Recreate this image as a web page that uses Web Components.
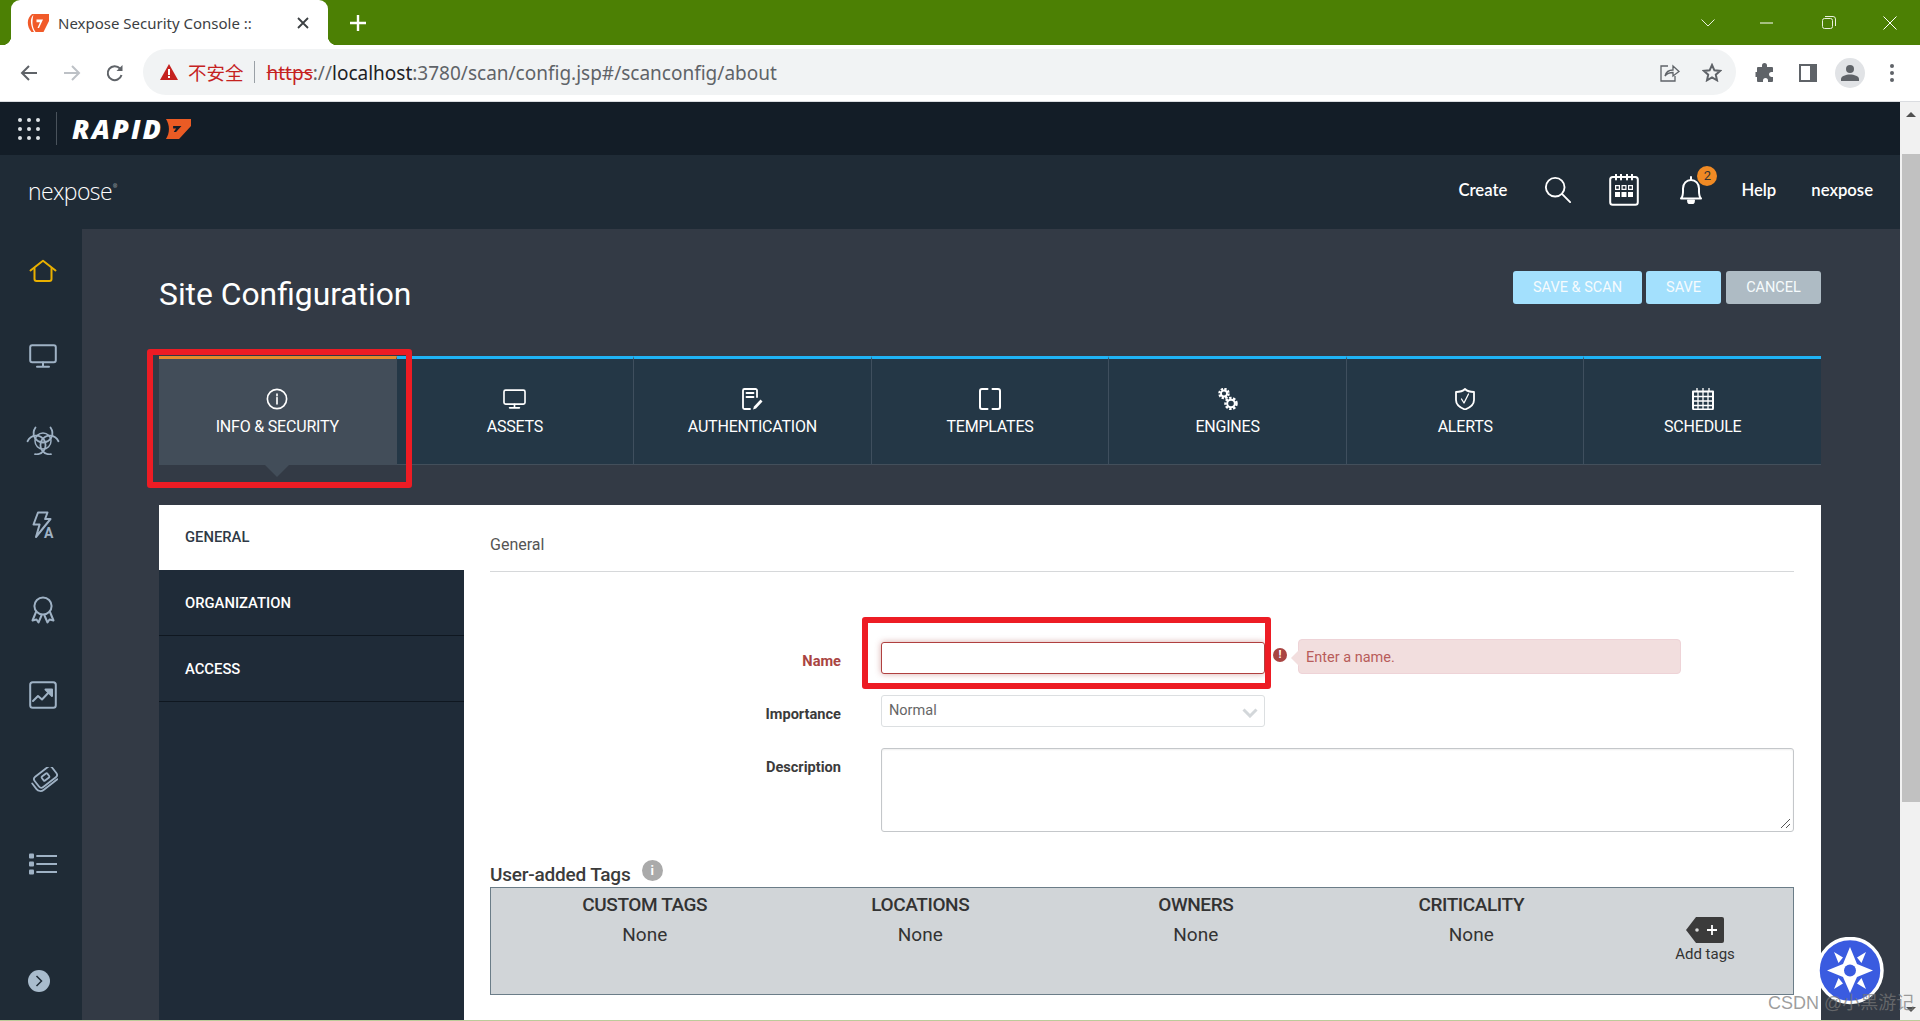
<!DOCTYPE html>
<html lang="en">
<head>
<meta charset="utf-8">
<title>Nexpose Security Console</title>
<style>
  html, body { margin: 0; height: 1021px; overflow: hidden; }
  body {
    display: flex;
    flex-direction: column;
    background: #bccb9a;
    padding-bottom: 1px;
    box-sizing: border-box;
    font-family: Roboto, "Liberation Sans", sans-serif;
    position: relative;
  }
</style>
</head>
<body>
<browser-tabs></browser-tabs>
<browser-toolbar></browser-toolbar>
<app-page>
  <platform-bar></platform-bar>
  <nexpose-header></nexpose-header>
  <app-body>
    <side-nav></side-nav>
    <site-config></site-config>
  </app-body>
</app-page>

<script>
const BIO_LOBE = `<path d="M10.500 1.500C6 8 10 16 18 16.500C26 16 30 8 25.500 1.500"/>`;
const ICONS = {
  home: [28, 24, `<path d="M1.5 11.5 14 1.8l12.5 9.7" /><path d="M5.5 9.5V20a2 2 0 0 0 2 2h13a2 2 0 0 0 2-2V9.5"/>`],
  monitor: [28, 24, `<rect x="1.2" y="1.2" width="25.6" height="17" rx="2"/><path d="M14 18.5v4M8 22.8h12"/>`],
  bio: [36, 29, `${BIO_LOBE}<g transform="rotate(120 18 15)">${BIO_LOBE}</g><g transform="rotate(240 18 15)">${BIO_LOBE}</g><circle cx="18" cy="15" r="8" stroke-width="1.500"/>`],
  bolt: [24, 28, `<path d="M7 1.500h9.500l-2.400 6.500h5.400L5 26l3.600-12.500H2.500z"/>`],
  ribbon: [24, 28, `<circle cx="12" cy="10" r="8.600"/><path d="M5 16 1.500 24.500l4-1 2 3 3-7M19 16l3.500 8.500-4-1-2 3-3-7"/>`],
  chart: [28, 28, `<rect x="1.200" y="1.200" width="25.600" height="25.600" rx="2.500"/><path d="m4 20 5-5 4 3.500 8.500-9"/><path d="M16.500 8.500h6.500V15z" fill="currentColor"/>`],
  ticket: [30, 25, `<g transform="translate(17.500 10) rotate(-38)"><rect x="-11" y="-6.500" width="22" height="13" rx="3"/><rect x="-3.500" y="-2.500" width="7" height="5" rx="1"/><path d="M-14.500-3v7a5 5 0 0 0 5 5H8"/></g>`],
  list: [28, 22, `<path d="M8 3h20M8 11h20M8 19h20"/><g fill="currentColor" stroke="none"><rect x="0" y="0.500" width="5" height="5" rx="1"/><rect x="0" y="8.500" width="5" height="5" rx="1"/><rect x="0" y="16.500" width="5" height="5" rx="1"/></g>`],
  info: [24, 24, `<circle cx="12" cy="12" r="10.500"/><path d="M12 10.500v7M12 6.500v2"/>`],
  doc: [22, 22, `<path d="M16 9V2.500A1.500 1.500 0 0 0 14.500 1h-11A1.500 1.500 0 0 0 2 2.500v17A1.500 1.500 0 0 0 3.500 21H9"/><path d="M5.500 5h7M5.500 9h7"/><path d="m12 21.500 1-3 6.500-7 2 2-6.500 7z" fill="currentColor" stroke="none"/>`],
  frame: [22, 22, `<path d="M8.500 1H3a2 2 0 0 0-2 2v16a2 2 0 0 0 2 2h5.500M13.500 1H19a2 2 0 0 1 2 2v16a2 2 0 0 1-2 2h-5.500"/>`],
  gears: [20, 22, `<g stroke-linecap="butt"><circle cx="6" cy="5.500" r="4.500" stroke-width="2.500" stroke-dasharray="2.200 1.300"/><circle cx="13" cy="15.500" r="5.500" stroke-width="2.500" stroke-dasharray="2.400 1.500"/></g><circle cx="6" cy="5.500" r="3" stroke-width="1.800"/><circle cx="13" cy="15.500" r="3.800" stroke-width="2"/>`],
  shield: [20, 22, `<path d="M10 1c2 2 5 3 9 3v8c0 5-5 8-9 9.500C6 20 1 17 1 12V4c4 0 7-1 9-3z"/><path d="m6.500 11 2.500 4 4.500-9" stroke-width="1.300"/>`],
  grid: [22, 22, `<path d="M1 3.500h20V20a1.500 1.500 0 0 1-1.500 1.500h-17A1.500 1.500 0 0 1 1 20z"/><path d="M1 8.500h20M1 13h20M1 17.500h20M6 3.500v18M11 3.500v18M16 3.500v18M5 0v3M11 0v3M17 0v3" stroke-width="1.300"/>`],
  search: [30, 30, `<circle cx="12" cy="12" r="10"/><path d="m19.500 19.500 8.500 8.500"/>`],
  cal: [30, 32, `<rect x="1.200" y="3" width="27.600" height="27.800" rx="2.500"/><path d="M7 0.500v5M12 0.500v5M18 0.500v5M23 0.500v5"/><g fill="currentColor" stroke="none"><path d="M6 11h5v5H6zM12.500 11h5v5h-5zM19 11h5v5h-5zM6 18h5v5H6zM12.500 18h5v5h-5zM19 18h5v5h-5z"/></g><path d="M7.200 12.200h2.600v2.600H7.200zM13.700 12.200h2.600v2.600h-2.600zM20.200 12.200h2.600v2.600h-2.600z" fill="#1f2b36" stroke="none"/>`],
  bell: [24, 28, `<path d="M2 22.500c2.500-2.500 2-5 2-10 0-5 3.500-8.500 8-8.500s8 3.500 8 8.500c0 5-.5 7.500 2 10z"/><path d="M12 1v3"/><path d="M9 24.500a3 3 0 0 0 6 0z" fill="currentColor"/>`]
};

class NxIcon extends HTMLElement {
  connectedCallback() {
    this.attachShadow({mode: "open"});
    const [w, h, body] = ICONS[this.getAttribute("name")];
    const width = this.getAttribute("width") || w;
    const height = this.getAttribute("height") || h;
    const stroke = this.getAttribute("stroke") || 2;
    this.shadowRoot.innerHTML = `
      <style>:host { display: block; line-height: 0; }</style>
      <svg width="${width}" height="${height}" viewBox="0 0 ${w} ${h}" fill="none" stroke="currentColor"
        stroke-width="${stroke}" stroke-linecap="round" stroke-linejoin="round">${body}</svg>
    `;
  }
}
customElements.define("nx-icon", NxIcon);

class BrowserTabs extends HTMLElement {
  connectedCallback() {
    this.attachShadow({mode: "open"});
    this.shadowRoot.innerHTML = `
      <style>
        :host { display: flex; height: 45px; background: #4c8004; align-items: stretch; flex: none; padding-left: 11px; }
        .tab {
          width: 317px; background: #fff; border-radius: 9px 9px 0 0; position: relative;
          display: flex; align-items: center; padding-left: 16px; box-sizing: border-box;
          font: 15px "Noto Sans", "Open Sans", sans-serif; color: #3c4043;
        }
        .tab::before, .tab::after { content: ""; position: absolute; bottom: 0; width: 9px; height: 9px; }
        .tab::before { left: -9px; background: radial-gradient(circle at 0 0, #4c8004 9px, #fff 9.500px); }
        .tab::after { right: -9px; background: radial-gradient(circle at 100% 0, #4c8004 9px, #fff 9.500px); }
        .title { margin-left: 9px; width: 234px; white-space: nowrap; }
        .close { width: 16px; height: 16px; margin-left: 3px; }
        .plus { margin-left: 21px; align-self: center; }
        .win { margin-left: auto; display: flex; align-items: center; color: #fff; }
        .win svg { display: block; }
      </style>
      <div class="tab">
        <svg width="22" height="20" viewBox="0 0 22 20">
          <path d="M5 1h2.500C4.500 3 3.500 6.500 4 10c.3 3 1.500 6.500 3 9H4.500C2 16 .8 13 .8 9.500.8 6 2.500 3 5 1z" fill="#f15a29"/>
          <path d="M6.500 1H22v7l-5.500 11H8.500C6.500 16 5.500 13 5.500 10c0-4 .5-6.500 1-9z" fill="#f15a29"/>
          <path d="M9.500 6.500H16L12 15h-1.500l2.500-5.800H9.500z" fill="#fff"/>
        </svg>
        <span class="title">Nexpose Security Console ::</span>
        <svg class="close" viewBox="0 0 16 16" stroke="#3c4043" stroke-width="1.800"><path d="M3 3l10 10M13 3 3 13"/></svg>
      </div>
      <svg class="plus" width="18" height="18" viewBox="0 0 18 18" stroke="#fff" stroke-width="2.400"><path d="M9 1v16M1 9h16"/></svg>
      <div class="win">
        <svg width="14" height="8" viewBox="0 0 14 8" fill="none" stroke="#e8f0dc" style="margin-right:45px"><path d="M.5.5 7 7l6.500-6.500"/></svg>
        <svg width="13" height="2" viewBox="0 0 13 2" fill="none" stroke="#fff" style="margin-right:49px"><path d="M0 1h13"/></svg>
        <svg width="14" height="13" viewBox="0 0 14 13" fill="none" stroke="#e8f0dc" style="margin-right:47px"><rect x=".5" y="2.500" width="10" height="10" rx="2"/><path d="M3 .5h8a2.500 2.500 0 0 1 2.500 2.500v7"/></svg>
        <svg width="14" height="14" viewBox="0 0 14 14" fill="none" stroke="#fff" style="margin-right:23px"><path d="m.5.500 13 13M13.500.5l-13 13"/></svg>
      </div>
    `;
  }
}
customElements.define("browser-tabs", BrowserTabs);

class BrowserToolbar extends HTMLElement {
  connectedCallback() {
    this.attachShadow({mode: "open"});
    this.shadowRoot.innerHTML = `
      <style>
        :host {
          display: flex; height: 57px; box-sizing: border-box; background: #fff; flex: none; align-items: center;
          padding: 0 0 0 20px; border-bottom: 1px solid #dadce0; padding-bottom: 1px;
        }
        .nav { display: flex; align-items: center; gap: 25px; width: 123px; }
        .bar {
          width: 1593px; height: 46px; border-radius: 23px; background: #f1f3f4; box-sizing: border-box;
          display: flex; align-items: center; padding-left: 17px; margin-top: -1px;
          font: 19px "Noto Sans", "Open Sans", sans-serif; color: #5f6368; white-space: nowrap;
        }
        .url { position: relative; top: 1px; }
        .warn { font: 18.500px "Noto Sans CJK SC", sans-serif; color: #c5221f; margin-left: 10px; }
        .sep { width: 1px; height: 22px; background: #9aa0a6; margin: 0 12px 0 10px; }
        .https { color: #c5221f; text-decoration: line-through; }
        .host { color: #202124; }
        .end { margin-left: auto; display: flex; align-items: center; gap: 22px; padding-right: 14px; }
        .tools { display: flex; align-items: center; }
        svg { display: block; flex: none; }
        .avatar { width: 30px; height: 30px; border-radius: 50%; background: #e1e3e6; display: flex; align-items: center; justify-content: center; }
      </style>
      <div class="nav">
        <svg width="18" height="18" viewBox="0 0 18 18" fill="none" stroke="#5f6368" stroke-width="2"><path d="M17 9H2M9 2 2 9l7 7"/></svg>
        <svg width="18" height="18" viewBox="0 0 18 18" fill="none" stroke="#bdc1c6" stroke-width="2"><path d="M1 9h15M9 2l7 7-7 7"/></svg>
        <svg width="18" height="18" viewBox="0 0 18 18" fill="none" stroke="#5f6368" stroke-width="2"><path d="M15.500 11a7 7 0 1 1-1.500-6.500"/><path d="M16.500 1v6h-6" fill="#5f6368" stroke="none"/></svg>
      </div>
      <div class="bar">
        <svg width="18" height="16" viewBox="0 0 18 16"><path d="M9 0 18 16H0z" fill="#c5221f"/><path d="M8 5h2v6H8zM8 12h2v2H8z" fill="#fff"/></svg>
        <span class="warn">不安全</span>
        <span class="sep"></span>
        <span class="url"><span class="https">https</span>://<span class="host">localhost</span>:3780/scan/config.jsp#/scanconfig/about</span>
        <div class="end">
          <svg width="20" height="19" viewBox="0 0 20 19" fill="none" stroke="#5f6368" stroke-width="1.300"><path d="M8 3H1v15h14v-5"/><path d="M5 13c1-4 4-6 8-6V3l6 5.500L13 13V9.500c-3 0-6 1-8 3.500z"/></svg>
          <svg width="20" height="19" viewBox="0 0 20 19" fill="none" stroke="#5f6368" stroke-width="2"><path d="m10 2 2.400 5.300 5.600.6-4.200 3.800 1.200 5.600L10 14.500 5 17.300l1.200-5.600L2 7.900l5.600-.6z"/></svg>
        </div>
      </div>
      <div class="tools" style="margin-left:19px">
        <svg width="20" height="20" viewBox="0 0 20 20" fill="#5f6368"><path d="M7 2.500a2.500 2.500 0 0 1 5 0V4h5a1 1 0 0 1 1 1v4h-1.500a2.500 2.500 0 0 0 0 5H18v4a1 1 0 0 1-1 1h-4v-1.500a2.500 2.500 0 0 0-5 0V19H3a1 1 0 0 1-1-1v-4H.5v-5H2V5a1 1 0 0 1 1-1h4z"/></svg>
        <svg style="margin-left:24px" width="18" height="18" viewBox="0 0 18 18"><path d="M0 0h18v18H0z" fill="#5f6368"/><path d="M2 2h9v14H2z" fill="#fff"/></svg>
        <div class="avatar" style="margin-left:18px">
          <svg width="18" height="16" viewBox="0 0 18 16" fill="#5f6368"><circle cx="9" cy="4" r="4"/><path d="M0 16v-2c0-3 5-4.500 9-4.500s9 1.500 9 4.500v2z"/></svg>
        </div>
        <svg style="margin-left:25px" width="4" height="18" viewBox="0 0 4 18" fill="#5f6368"><circle cx="2" cy="2" r="2"/><circle cx="2" cy="9" r="2"/><circle cx="2" cy="16" r="2"/></svg>
      </div>
    `;
  }
}
customElements.define("browser-toolbar", BrowserToolbar);

class AppPage extends HTMLElement {
  connectedCallback() {
    this.attachShadow({mode: "open"});
    this.shadowRoot.innerHTML = `
      <style>
        :host { display: grid; grid-template-columns: 1900px 20px; flex: 1; min-height: 0; }
        .main { display: flex; flex-direction: column; min-height: 0; overflow: hidden; }
        .scroll { background: #f1f1f1; display: flex; flex-direction: column; align-items: center; position: relative; }
        .up, .down { width: 0; height: 0; border: 5px solid transparent; position: absolute; left: 6px; }
        .up { border-bottom: 5px solid #505050; top: 5px; border-left-width: 5px; }
        .down { border-top: 5px solid #505050; bottom: 3px; }
        .thumb { position: absolute; top: 52px; left: 2px; right: 0; height: 648px; background: #c1c1c1; }
      </style>
      <div class="main"><slot></slot></div>
      <div class="scroll"><span class="up"></span><span class="thumb"></span><span class="down"></span></div>
    `;
  }
}
customElements.define("app-page", AppPage);

class PlatformBar extends HTMLElement {
  connectedCallback() {
    this.attachShadow({mode: "open"});
    const dots = Array(9).fill("<i></i>").join("");
    this.shadowRoot.innerHTML = `
      <style>
        :host { display: flex; align-items: center; height: 53px; flex: none; background: #131d27; padding-left: 18px; }
        .dots { display: grid; grid-template-columns: repeat(3, 4px); gap: 5px; }
        .dots i { width: 4px; height: 4px; border-radius: 50%; background: #dfe4e8; }
        .sep { width: 1px; height: 33px; background: #49525b; margin: 0 15px 0 16px; }
        .logo { display: flex; align-items: center; font: italic 800 27px/30px "Open Sans", sans-serif; color: #fff; letter-spacing: 2.100px; }
        svg { display: block; margin-left: -3px; }
      </style>
      <div class="dots">${dots}</div>
      <span class="sep"></span>
      <div class="logo">RAPID<svg width="31" height="20" viewBox="0 0 26 20" preserveAspectRatio="none"><path d="M5 0h21v7L16 20H5c1.500-3 2.500-6 2.500-10S6.500 3 5 0z" fill="#ea5b24"/><path d="M11 7h7l-4.500 6h-2l2-3.500H11z" fill="#131d27"/></svg></div>
    `;
  }
}
customElements.define("platform-bar", PlatformBar);

class NexposeHeader extends HTMLElement {
  connectedCallback() {
    this.attachShadow({mode: "open"});
    this.shadowRoot.innerHTML = `
      <style>
        :host {
          display: flex; align-items: center; height: 74px; flex: none; background: #1f2b36; color: #fff; box-sizing: border-box;
          padding: 0 27px 4px 28px; font: 600 16.700px Lato, Inter, sans-serif;
        }
        .brand { font: 300 23px "Open Sans", sans-serif; letter-spacing: -.6px; margin-right: auto; position: relative; top: 1px; }
        .brand sup { font-size: 5px; vertical-align: 12px; margin-left: 1px; }
        .create { margin-right: 37px; }
        .bell { position: relative; margin: 0 38px 0 40px; }
        .badge {
          position: absolute; top: -10px; left: 18px; width: 20px; height: 20px; border-radius: 50%;
          background: #f08a24; color: #333; font: 13px/20px Roboto, sans-serif; text-align: center;
        }
        .help { margin-right: 35px; }
      </style>
      <span class="brand">nexpose<sup>®</sup></span>
      <span class="create">Create</span>
      <nx-icon name="search" width="28" height="28" stroke="2"></nx-icon>
      <nx-icon name="cal" style="margin-left:37px" stroke="2"></nx-icon>
      <div class="bell"><nx-icon name="bell" stroke="2"></nx-icon><span class="badge">2</span></div>
      <span class="help">Help</span>
      <span>nexpose</span>
    `;
  }
}
customElements.define("nexpose-header", NexposeHeader);

class AppBody extends HTMLElement {
  connectedCallback() {
    this.attachShadow({mode: "open"});
    this.shadowRoot.innerHTML = `
      <style>:host { display: grid; grid-template-columns: 82px 1fr; flex: 1; min-height: 0; }</style>
      <slot></slot>
    `;
  }
}
customElements.define("app-body", AppBody);

class SideNav extends HTMLElement {
  connectedCallback() {
    this.attachShadow({mode: "open"});
    this.shadowRoot.innerHTML = `
      <style>
        :host { display: block; background: #1f2b36; color: #9fb2c5; position: relative; padding-left: 4px; }
        .item { height: 84.700px; display: flex; align-items: center; justify-content: center; }
        .first { color: #e9b000; }
        .bolt { position: relative; }
        .bolt span { position: absolute; left: 13px; bottom: -2px; font: 700 14px/16px Roboto, sans-serif; }
        .more {
          position: absolute; left: 28px; bottom: 28px; width: 22px; height: 22px; border-radius: 50%;
          background: #a9bccd; display: flex; align-items: center; justify-content: center;
        }
      </style>
      <div class="item first"><nx-icon name="home"></nx-icon></div>
      <div class="item"><nx-icon name="monitor"></nx-icon></div>
      <div class="item"><nx-icon name="bio" stroke="1.800"></nx-icon></div>
      <div class="item"><div class="bolt"><nx-icon name="bolt"></nx-icon><span>A</span></div></div>
      <div class="item"><nx-icon name="ribbon"></nx-icon></div>
      <div class="item"><nx-icon name="chart"></nx-icon></div>
      <div class="item"><nx-icon name="ticket" stroke="1.800"></nx-icon></div>
      <div class="item"><nx-icon name="list" stroke="1.800"></nx-icon></div>
      <div class="more"><svg width="8" height="12" viewBox="0 0 8 12" fill="none" stroke="#1f2b36" stroke-width="1.500"><path d="m1.500 1 5 5-5 5"/></svg></div>
    `;
  }
}
customElements.define("side-nav", SideNav);

class ConfigTab extends HTMLElement {
  connectedCallback() {
    this.attachShadow({mode: "open"});
    const active = this.hasAttribute("active");
    this.shadowRoot.innerHTML = `
      <style>
        :host {
          display: flex; flex-direction: column; align-items: center; box-sizing: border-box; position: relative;
          flex: 1; height: 109px; padding-top: 29px; color: #fff; background: ${active ? "#424d59" : "#243746"};
          border-top: 3px solid ${active ? "#e58a2b" : "#1fb3f5"};
          border-right: 1px solid ${active ? "transparent" : "#3f4f5e"};
          border-bottom: 1px solid ${active ? "transparent" : "#434f5b"};
        }
        :host(:last-child) { border-right: 0; }
        .icon { height: 22px; display: flex; align-items: center; }
        .text { font: 400 16px/18px Roboto, sans-serif; margin-top: 8px; letter-spacing: -.2px; white-space: nowrap; }
        .arrow {
          position: absolute; left: 50%; bottom: -13px; margin-left: -12px; width: 0; height: 0;
          border: 12px solid transparent; border-bottom: 0; border-top: 12px solid #424d59;
        }
      </style>
      <div class="icon"><slot name="icon"></slot></div>
      <div class="text"><slot></slot></div>
      ${active ? '<span class="arrow"></span>' : ""}
    `;
  }
}
customElements.define("config-tab", ConfigTab);

class ActionButton extends HTMLElement {
  connectedCallback() {
    this.attachShadow({mode: "open"});
    this.shadowRoot.innerHTML = `
      <style>
        :host {
          display: flex; align-items: center; justify-content: center; height: 33px; box-sizing: border-box;
          border-radius: 3px; color: #f6fbfd; font: 400 14.500px Roboto, sans-serif; background: #a3e0fd;
        }
        :host([cancel]) { background: #aebbc4; }
      </style>
      <slot></slot>
    `;
  }
}
customElements.define("action-button", ActionButton);

class FormRow extends HTMLElement {
  connectedCallback() {
    this.attachShadow({mode: "open"});
    this.shadowRoot.innerHTML = `
      <style>
        :host { display: grid; grid-template-columns: 351px 1fr; column-gap: 40px; margin-bottom: 21px; }
        .label { text-align: right; font: 700 14.600px/17px Roboto, sans-serif; color: #3b3b3b; padding-top: 11px; }
        :host([error]) .label { color: #a94442; }
        .field { display: flex; align-items: flex-start; }
      </style>
      <div class="label"><slot name="label"></slot></div>
      <div class="field"><slot></slot></div>
    `;
  }
}
customElements.define("form-row", FormRow);

class TagColumn extends HTMLElement {
  connectedCallback() {
    this.attachShadow({mode: "open"});
    this.shadowRoot.innerHTML = `
      <style>
        :host { display: block; text-align: center; color: #333; font: 400 19px/20px Roboto, sans-serif; padding-top: 7px; }
        .head { font-weight: 500; letter-spacing: -.4px; margin-bottom: 10px; }
      </style>
      <div class="head">${this.getAttribute("title")}</div>
      <div>None</div>
    `;
  }
}
customElements.define("tag-column", TagColumn);

class UserTags extends HTMLElement {
  connectedCallback() {
    this.attachShadow({mode: "open"});
    this.shadowRoot.innerHTML = `
      <style>
        :host { display: block; }
        .title { display: flex; align-items: center; height: 25px; font: 500 19px Roboto, sans-serif; color: #3b3b3b; letter-spacing: -.2px; }
        .i {
          width: 21px; height: 21px; border-radius: 50%; background: #aaa; color: #fff; margin-left: 11px; position: relative; top: -4px;
          font: 700 13px/21px Roboto, sans-serif; text-align: center;
        }
        .box {
          height: 108px; box-sizing: border-box; background: #d1d5d8; border: 1px solid #6b7d88;
          display: grid; grid-template-columns: repeat(4, 275.500px) 1fr; padding-left: 16px;
        }
        .add { display: flex; flex-direction: column; align-items: center; padding: 29px 0 0 8px; font: 15px/18px Roboto, sans-serif; color: #333; }
        svg { display: block; margin-bottom: 2px; }
      </style>
      <div class="title">User-added Tags<span class="i">i</span></div>
      <div class="box">
        <tag-column title="CUSTOM TAGS"></tag-column>
        <tag-column title="LOCATIONS"></tag-column>
        <tag-column title="OWNERS"></tag-column>
        <tag-column title="CRITICALITY"></tag-column>
        <div class="add">
          <svg width="38" height="26" viewBox="0 0 38 26">
            <path d="M10 0h26a2 2 0 0 1 2 2v22a2 2 0 0 1-2 2H10L0 13z" fill="#3b3b3b"/>
            <circle cx="11" cy="13" r="1.800" fill="#ddd"/>
            <path d="M26 8v10M21 13h10" stroke="#fff" stroke-width="1.800"/>
          </svg>
          Add tags
        </div>
      </div>
    `;
  }
}
customElements.define("user-tags", UserTags);

class SiteForm extends HTMLElement {
  connectedCallback() {
    this.attachShadow({mode: "open"});
    this.shadowRoot.innerHTML = `
      <style>
        :host { display: block; padding: 0 27px 0 26px; background: #fff; color: #444; }
        h2 {
          margin: 0 0 70px; height: 67px; box-sizing: border-box; padding-top: 30px; border-bottom: 1px solid #d6d8da;
          font: 400 16px/20px Roboto, sans-serif; color: #555;
        }
        .input {
          width: 384px; height: 32px; box-sizing: border-box; border: 1px solid #b0403f; border-radius: 3px;
          box-shadow: 0 0 6px rgba(169, 68, 66, .45); background: #fff;
        }
        .select {
          width: 384px; height: 32px; box-sizing: border-box; border: 1px solid #dcdfe1; border-radius: 3px; color: #666;
          display: flex; justify-content: space-between; padding: 5px 6px 0 7px; font: 14.500px/20px Roboto, sans-serif;
        }
        .select svg { margin-top: 7px; }
        .area {
          flex: 1; height: 84px; box-sizing: border-box; border: 1px solid #c4c7ca; border-radius: 3px; position: relative;
          box-shadow: inset 0 1px 2px rgba(0, 0, 0, .07);
        }
        .area svg { position: absolute; right: 2px; bottom: 2px; }
        .bang {
          width: 14px; height: 14px; border-radius: 50%; background: #a94442; color: #fff; margin: 6px 0 0 8px; flex: none;
          font: 700 11px/14px Roboto, sans-serif; text-align: center;
        }
        .tip {
          position: relative; margin: -3px 0 0 11px; width: 383px; height: 35px; box-sizing: border-box; padding-left: 7px;
          background: #f2dede; border: 1px solid #eed3d7; border-radius: 4px; color: #b85c5a; font: 14.500px/35px Roboto, sans-serif;
        }
        .tip::before {
          content: ""; position: absolute; left: -8px; top: 10px; width: 0; height: 0;
          border: 8px solid transparent; border-left: 0; border-right: 8px solid #f2dede;
        }
      </style>
      <h2>General</h2>
      <form-row error>
        <span slot="label">Name</span>
        <div class="input"></div>
        <div class="bang">!</div>
        <div class="tip">Enter a name.</div>
      </form-row>
      <form-row>
        <span slot="label">Importance</span>
        <div class="select">Normal
          <svg width="16" height="10" viewBox="0 0 16 10" fill="none" stroke="#d3d7da" stroke-width="3"><path d="m1.500 1.500 6.500 6.500 6.500-6.500"/></svg>
        </div>
      </form-row>
      <form-row style="margin-bottom:30px">
        <span slot="label">Description</span>
        <div class="area"><svg width="11" height="11" viewBox="0 0 11 11" stroke="#555"><path d="M1 10 10 1M6 10l4-4"/></svg></div>
      </form-row>
      <user-tags></user-tags>
    `;
  }
}
customElements.define("site-form", SiteForm);

class SiteConfig extends HTMLElement {
  connectedCallback() {
    this.attachShadow({mode: "open"});
    this.shadowRoot.innerHTML = `
      <style>
        :host { display: block; background: #333a45; padding: 42px 79px 0 77px; min-width: 0; overflow: hidden; }
        .head { display: flex; justify-content: space-between; align-items: flex-start; height: 85px; }
        h1 { margin: 4px 0 0 0; font: 400 31.800px/38px Roboto, sans-serif; color: #fff; }
        .actions { display: flex; gap: 4px; }
        .tabs { display: flex; }
        .panel { display: grid; grid-template-columns: 305px 1fr; margin-top: 40px; height: 520px; }
        .menu { background: #1f2b38; color: #fff; font: 500 14.800px Roboto, sans-serif; }
        .menu div {
          height: 66px; box-sizing: border-box; padding: 24px 0 0 26px; border-bottom: 1px solid #0f1720; line-height: 18px;
        }
        .menu .on { background: #fff; color: #2f3a46; height: 65px; padding-top: 23px; border-bottom: 0; }
      </style>
      <div class="head">
        <h1>Site Configuration</h1>
        <div class="actions">
          <action-button style="width:129px">SAVE &amp; SCAN</action-button>
          <action-button style="width:75px">SAVE</action-button>
          <action-button cancel style="width:95px;margin-left:1px">CANCEL</action-button>
        </div>
      </div>
      <div class="tabs">
        <config-tab active><nx-icon slot="icon" name="info" width="22" height="22" stroke="1.800"></nx-icon>INFO &amp; SECURITY</config-tab>
        <config-tab><nx-icon slot="icon" name="monitor" width="23" height="20" stroke="2"></nx-icon>ASSETS</config-tab>
        <config-tab><nx-icon slot="icon" name="doc" stroke="1.800"></nx-icon>AUTHENTICATION</config-tab>
        <config-tab><nx-icon slot="icon" name="frame" stroke="2"></nx-icon>TEMPLATES</config-tab>
        <config-tab><nx-icon slot="icon" name="gears" stroke="1.500"></nx-icon>ENGINES</config-tab>
        <config-tab><nx-icon slot="icon" name="shield" stroke="1.800"></nx-icon>ALERTS</config-tab>
        <config-tab><nx-icon slot="icon" name="grid" stroke="2"></nx-icon>SCHEDULE</config-tab>
      </div>
      <div class="panel">
        <div class="menu">
          <div class="on">GENERAL</div>
          <div>ORGANIZATION</div>
          <div>ACCESS</div>
        </div>
        <site-form></site-form>
      </div>
    `;
  }
}
customElements.define("site-config", SiteConfig);

// annotations, compass badge and watermark sit on top of the screenshot
class RedBox extends HTMLElement {
  connectedCallback() {
    this.attachShadow({mode: "open"});
    this.shadowRoot.innerHTML = `
      <style>:host { display: block; position: absolute; box-sizing: border-box; border: 6px solid #ed1c24; border-radius: 3px; pointer-events: none; }</style>
    `;
  }
}
customElements.define("red-box", RedBox);

class CompassBadge extends HTMLElement {
  connectedCallback() {
    this.attachShadow({mode: "open"});
    this.shadowRoot.innerHTML = `
      <style>:host { display: block; position: absolute; left: 1816px; top: 937px; width: 68px; height: 68px; }</style>
      <svg width="68" height="68" viewBox="0 0 68 68">
        <circle cx="34" cy="33.500" r="32" fill="#3a5be0" stroke="#fff" stroke-width="3.500"/>
        <path d="M34 10 41 27 57 33.500 41 40 34 56 27 40 11 33.500 27 27z" fill="#fff"/>
        <circle cx="34" cy="33.500" r="6" fill="#3a5be0"/>
        <path d="M18 15 27 20.500 22.500 26zM50 15 41 20.500 45.500 26zM18 52 27 46.500 22.500 41zM50 52 41 46.500 45.500 41z" fill="#fff"/>
      </svg>
    `;
  }
}
customElements.define("compass-badge", CompassBadge);

class WaterMark extends HTMLElement {
  connectedCallback() {
    this.attachShadow({mode: "open"});
    this.shadowRoot.innerHTML = `
      <style>
        :host {
          display: block; position: absolute; left: 1768px; top: 992px; white-space: nowrap;
          font: 18px/22px "Liberation Sans", "Noto Sans CJK SC", sans-serif; color: rgba(120, 120, 120, .72);
        }
      </style>
      CSDN @小黑游记
    `;
  }
}
customElements.define("water-mark", WaterMark);

for (const [l, t, w, h] of [[147, 349, 265, 139], [862, 617, 409, 72]]) {
  const box = document.createElement("red-box");
  box.style.cssText = `left:${l}px;top:${t}px;width:${w}px;height:${h}px`;
  document.body.append(box);
}
document.body.append(document.createElement("compass-badge"), document.createElement("water-mark"));
</script>
</body>
</html>
